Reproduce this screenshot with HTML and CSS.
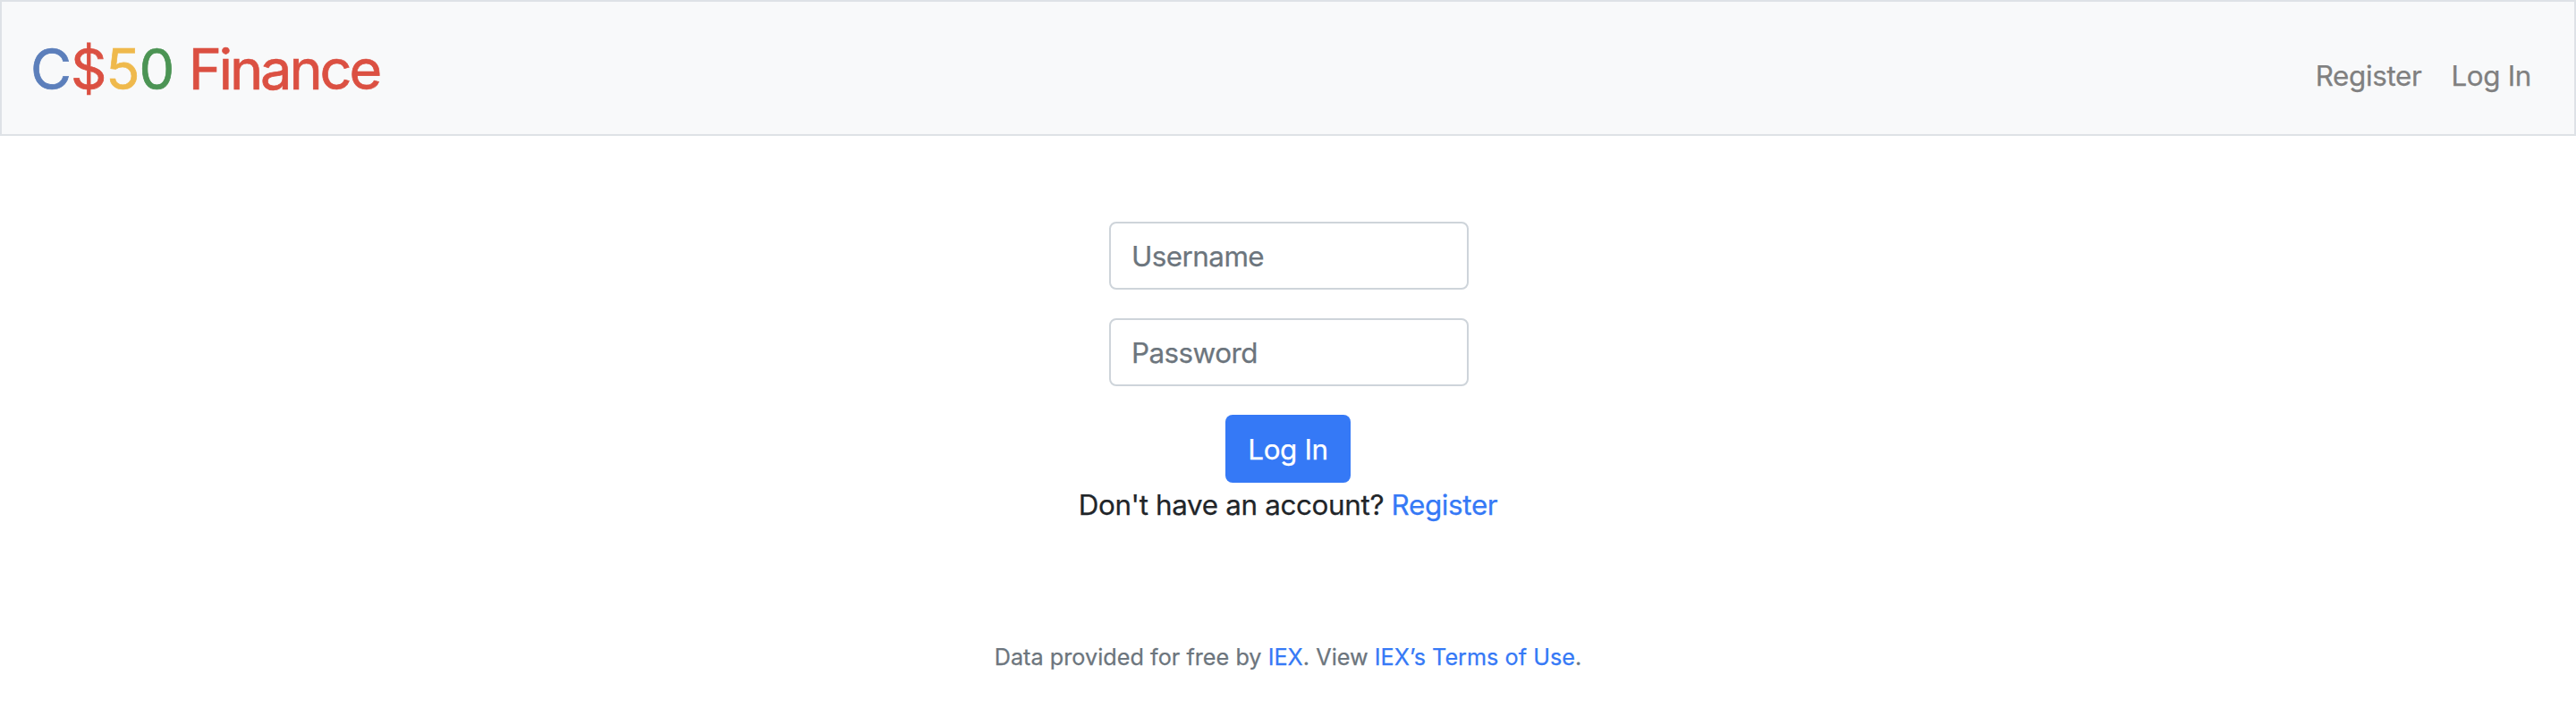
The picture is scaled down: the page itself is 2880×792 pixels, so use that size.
FILE: index.html
```
<!DOCTYPE html>
<html lang="en">
<head>
<meta charset="utf-8">
<title>C$50 Finance: Log In</title>
<link rel="stylesheet" href="styles.css">
</head>
<body>
<nav class="navbar">
  <a class="brand" href="#"><span class="blue">C</span><span class="red">$</span><span class="yellow">5</span><span class="green">0</span> <span class="red finance">Finance</span></a>
  <div class="nav-links"><a class="nav-link" href="#">Register</a><a class="nav-link" href="#">Log In</a></div>
</nav>
<main class="main">
  <form class="login">
    <input class="field" type="text" placeholder="Username">
    <input class="field" type="password" placeholder="Password">
    <button class="submit" type="button">Log In</button>
  </form>
  <p class="signup">Don't have an account? <a class="link" href="#">Register</a></p>
</main>
<footer class="footer">Data provided for free by <a class="link" href="#">IEX</a>. View <a class="link" href="#">IEX’s Terms of Use</a>.</footer>
</body>
</html>
```
FILE: styles.css
```
* { box-sizing: border-box; }
body {
  margin: 0;
  background: #fff;
  color: #212529;
  font: 400 31.4px/48px Inter, "Liberation Sans", sans-serif;
  letter-spacing: -0.35px;
  -webkit-text-stroke: 0.25px currentColor;
}
a { text-decoration: none; color: inherit; }
.navbar {
  display: flex;
  justify-content: space-between;
  align-items: center;
  height: 152px;
  padding: 0 48px 0 32px;
  border: 2px solid #dee2e6;
  background: #f8f9fa;
}
.brand {
  padding-top: 2px;
  font-size: 63px;
  line-height: 96px;
  letter-spacing: -1.1px;
  -webkit-text-stroke-width: 0.7px;
}
.finance { letter-spacing: -3.1px; }
.blue { color: #5c7fbb; }
.red { color: #db5042; }
.yellow { color: #efb94c; }
.green { color: #4b9454; }
.nav-links {
  display: flex;
  gap: 33px;
  padding-top: 18px;
  color: #808080;
}
.main {
  display: flex;
  flex-direction: column;
  align-items: center;
  padding-top: 96px;
}
.login {
  display: flex;
  flex-direction: column;
  align-items: center;
  gap: 32px;
}
.field {
  width: 402px;
  height: 76px;
  margin-left: 2px;
  padding: 2px 23px 0;
  border: 2px solid #ced4da;
  border-radius: 8px;
  background: #fff;
  font: inherit;
  letter-spacing: -0.55px;
}
.field::placeholder { color: #6c757d; opacity: 1; }
.submit {
  width: 140px;
  height: 76px;
  padding: 1px 0 0;
  border: 0;
  border-radius: 8px;
  background: #3579f6;
  color: #fff;
  font: inherit;
  letter-spacing: inherit;
}
.signup { margin: 0; padding-top: 1px; }
.link { color: #3579f6; }
.footer {
  padding-top: 127px;
  text-align: center;
  color: #6c757d;
  font-size: 25.2px;
  line-height: 38px;
  letter-spacing: 0.03px;
}
```
